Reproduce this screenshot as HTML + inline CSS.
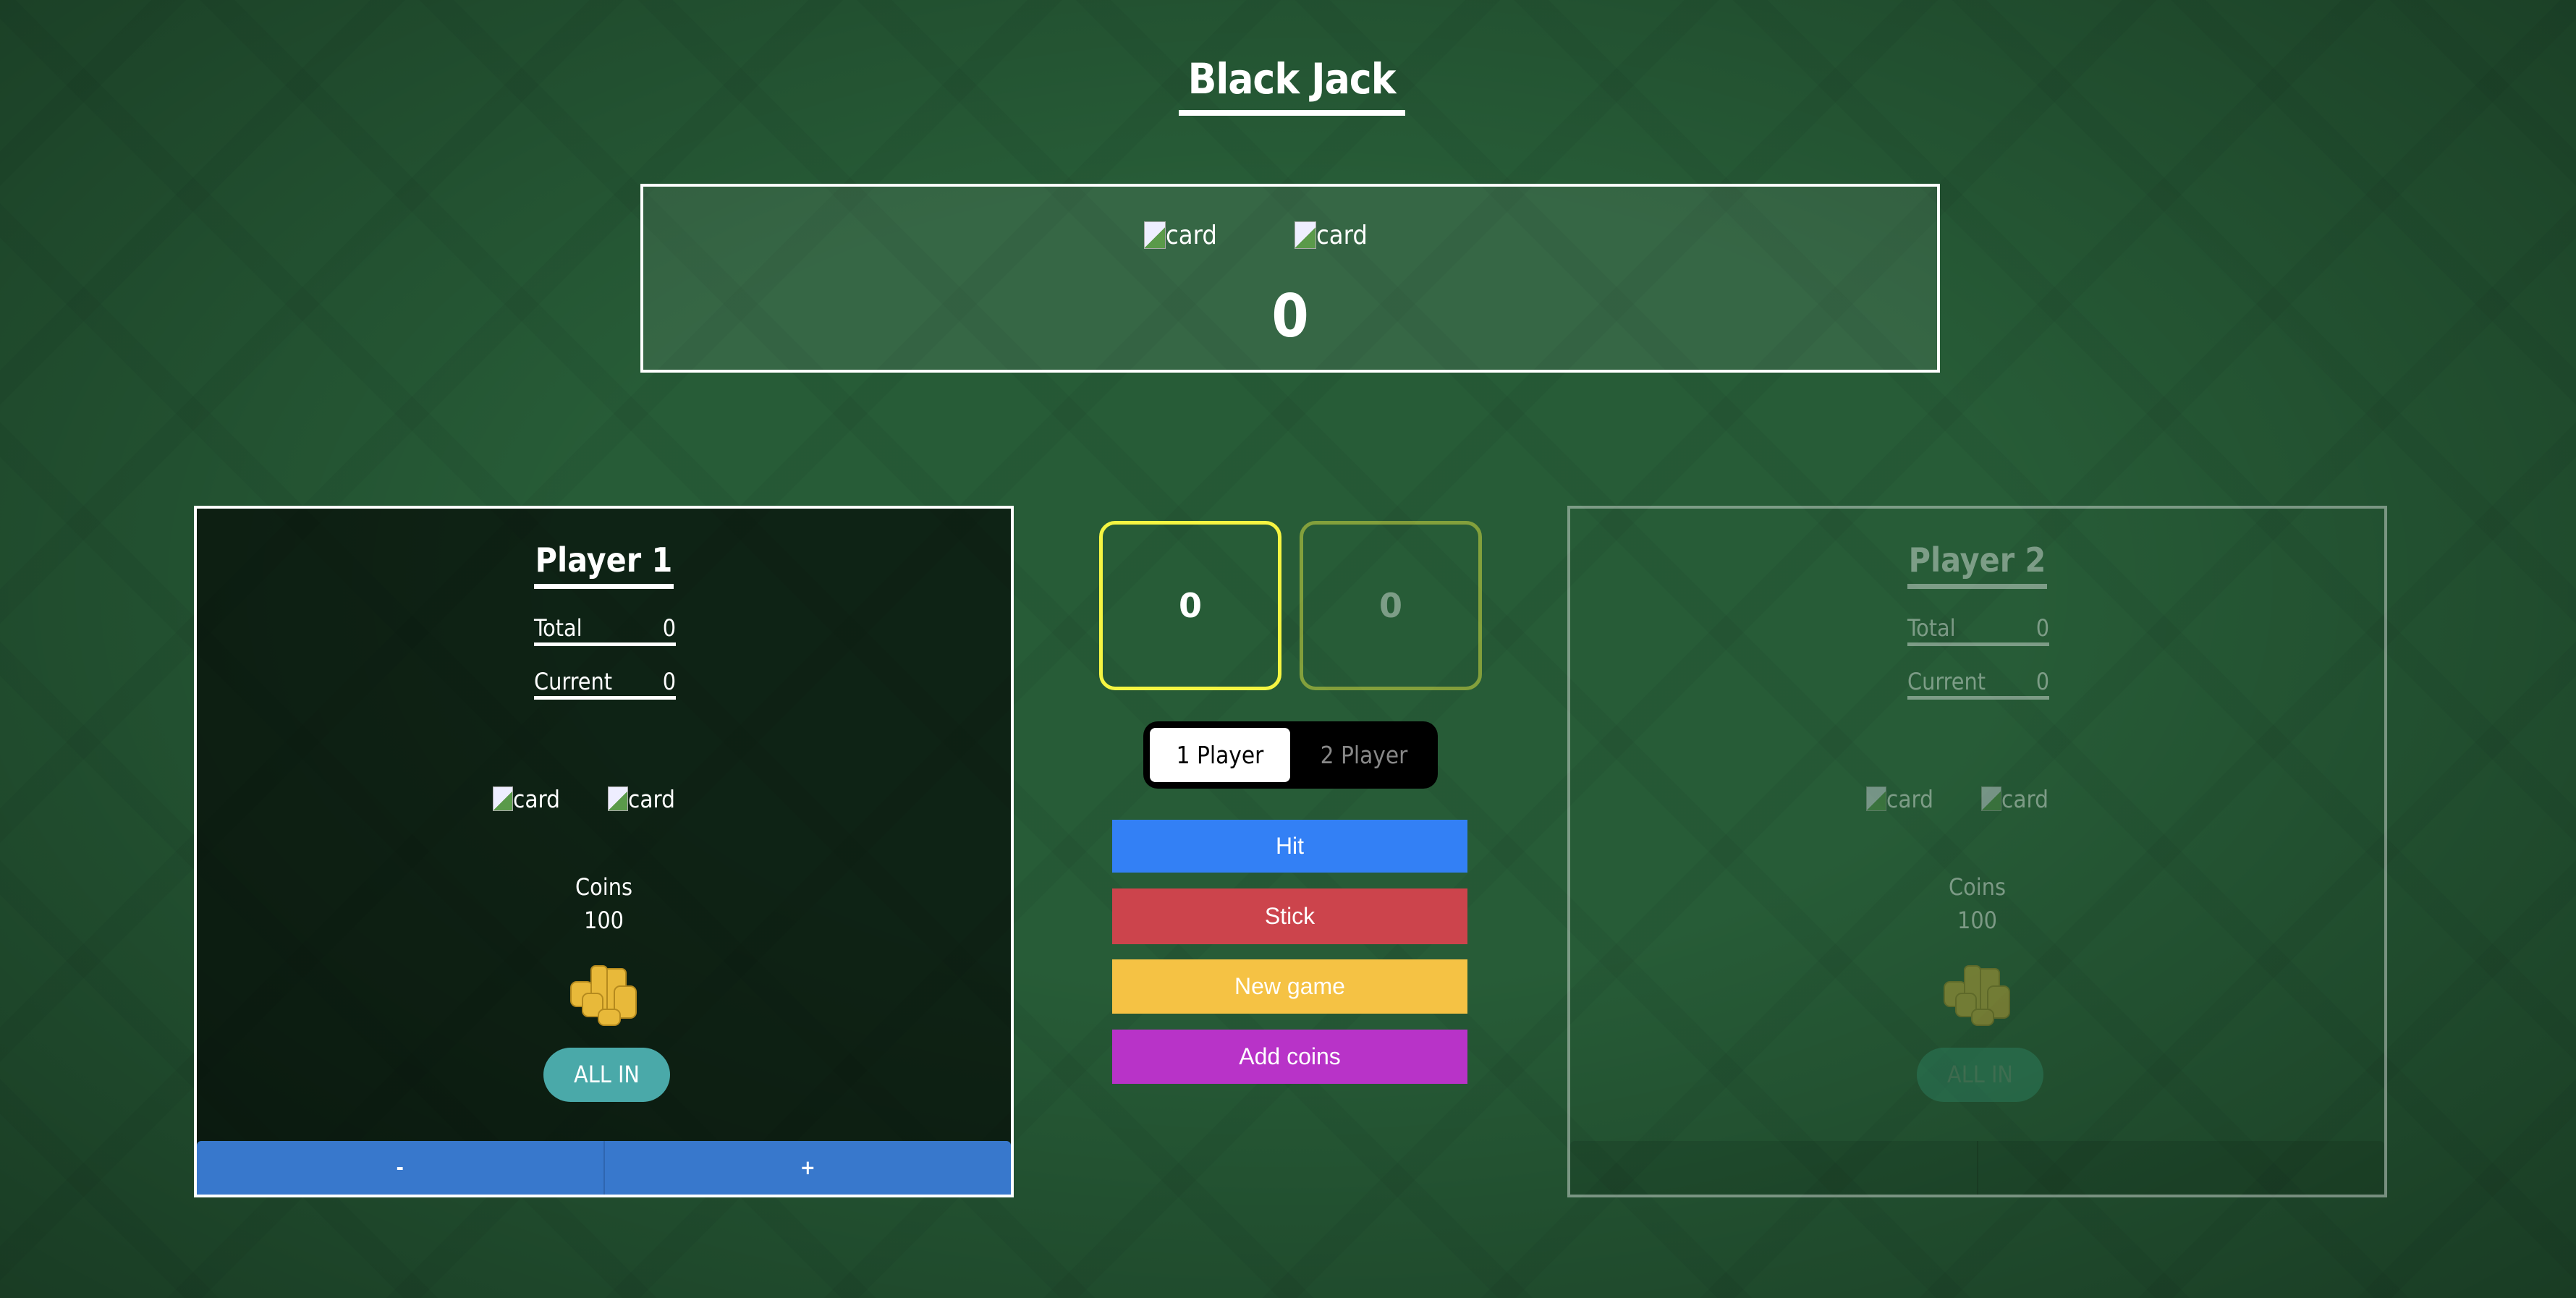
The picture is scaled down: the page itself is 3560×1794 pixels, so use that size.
<!DOCTYPE html>
<html><head><meta charset="utf-8"><style>
*{margin:0;padding:0;box-sizing:border-box}
html,body{width:3560px;height:1794px;overflow:hidden}
body{position:relative;font-family:"DejaVu Sans Condensed","DejaVu Sans","Liberation Sans",sans-serif;color:#fff;
background:
radial-gradient(ellipse at 50% 45%,rgba(0,0,0,0) 40%,rgba(0,0,0,.35) 100%),
repeating-linear-gradient(45deg,rgba(0,0,0,0) 0 180px,rgba(0,0,0,.045) 180px 214px),
repeating-linear-gradient(-45deg,rgba(0,0,0,0) 0 180px,rgba(0,0,0,.045) 180px 214px),
#275c37;}
.a{position:absolute}
.title{left:1505px;top:66px;width:560px;text-align:center;white-space:nowrap}
.title span{display:inline-block;width:313px;font-size:58px;font-weight:bold;line-height:86px;border-bottom:8px solid #fff;white-space:nowrap;letter-spacing:-1px}
.dealer{left:885px;top:254px;width:1796px;height:261px;border:4px solid #fff;background:rgba(255,255,255,.07)}
.card{font-size:36px;display:inline-flex;align-items:flex-end;line-height:1;white-space:nowrap}
.card i{display:inline-block;width:30px;height:38px;background:linear-gradient(135deg,#eef 0 55%,#5a9a4a 55%);border:1px solid #aaa}
.panel{top:699px;width:1133px;height:956px;border:4px solid #fff}
.p1{left:268px;background:rgba(0,0,0,.62)}
.p2{left:2166px;opacity:.4}
.ph{position:absolute;left:0;right:0;top:38px;text-align:center}
.ph span{display:inline-block;font-size:46px;font-weight:bold;line-height:66px;border-bottom:7px solid #fff;padding:0 2px;white-space:nowrap}
.row{position:absolute;left:466px;width:196px;font-size:32px;border-bottom:5px solid #fff;height:44px;display:flex;justify-content:space-between;line-height:38px}
.pc{position:absolute;top:384px;font-size:33px}
.pc i{width:28px;height:34px}
.coins{position:absolute;top:1200px;width:100%;text-align:center;font-size:32px;line-height:46px}
.allin{position:absolute;left:479px;top:745px;width:175px;height:75px;border-radius:38px;background:#4aa9a9;font-size:32px;line-height:75px;text-align:center}
.pm{position:absolute;left:0;right:0;bottom:0;height:74px;background:#3878cc;display:flex;border-radius:6px 6px 0 0}
.pm div{flex:1;text-align:center;font-size:28px;line-height:74px;font-weight:bold}
.pm div+div{border-left:2px solid #2e66b0}
.sb{top:720px;width:252px;height:234px;border:5px solid #f5f542;border-radius:22px;text-align:center;line-height:224px;font-size:46px;font-weight:bold;font-family:"DejaVu Sans",sans-serif}
.tog{left:1580px;top:997px;width:407px;height:93px;background:#000;border-radius:20px}
.tog .on{position:absolute;left:9px;top:9px;width:194px;height:75px;background:#fff;border-radius:8px;color:#000;text-align:center;line-height:75px;font-size:33px}
.tog .off{position:absolute;left:203px;top:9px;width:204px;height:75px;text-align:center;line-height:75px;font-size:33px;color:#888}
.btn{left:1537px;width:491px;text-align:center;font-family:"Liberation Sans",sans-serif;font-size:32px}
.coinimg{position:absolute;left:515px;top:630px;width:95px;height:86px}
</style></head><body>
<div class="a title"><span>Black Jack</span></div>
<div class="a dealer">
 <div style="position:absolute;left:692px;top:48px" class="card"><i></i>card</div>
 <div style="position:absolute;left:900px;top:48px" class="card"><i></i>card</div>
 <div style="position:absolute;left:0;right:0;top:130px;text-align:center;font-size:82px;font-weight:bold;line-height:100px">0</div>
</div>

<div class="a panel p1">
 <div class="ph"><span>Player 1</span></div>
 <div class="row" style="top:146px"><span>Total</span><span>0</span></div>
 <div class="row" style="top:220px"><span>Current</span><span>0</span></div>
 <span class="card pc" style="left:409px"><i></i>card</span><span class="card pc" style="left:568px"><i></i>card</span>
 <div class="coins" style="top:500px">Coins<br>100</div>
 <svg class="coinimg" viewBox="0 0 95 86"><g fill="#e8b93a" stroke="#b58a1e" stroke-width="2"><rect x="2" y="24" width="30" height="34" rx="8"/><rect x="48" y="6" width="30" height="60" rx="6"/><rect x="30" y="2" width="22" height="70" rx="6"/><rect x="18" y="40" width="28" height="32" rx="8"/><rect x="62" y="30" width="30" height="44" rx="8"/><rect x="40" y="62" width="30" height="22" rx="8"/></g></svg>
 <div class="allin">ALL IN</div>
 <div class="pm"><div>-</div><div>+</div></div>
</div>

<div class="a panel p2">
 <div class="ph"><span>Player 2</span></div>
 <div class="row" style="top:146px"><span>Total</span><span>0</span></div>
 <div class="row" style="top:220px"><span>Current</span><span>0</span></div>
 <span class="card pc" style="left:409px"><i></i>card</span><span class="card pc" style="left:568px"><i></i>card</span>
 <div class="coins" style="top:500px">Coins<br>100</div>
 <svg class="coinimg" viewBox="0 0 95 86"><g fill="#e8b93a" stroke="#b58a1e" stroke-width="2"><rect x="2" y="24" width="30" height="34" rx="8"/><rect x="48" y="6" width="30" height="60" rx="6"/><rect x="30" y="2" width="22" height="70" rx="6"/><rect x="18" y="40" width="28" height="32" rx="8"/><rect x="62" y="30" width="30" height="44" rx="8"/><rect x="40" y="62" width="30" height="22" rx="8"/></g></svg>
 <div class="allin" style="background:#2f8a6a;color:#6a9a80">ALL IN</div>
 <div class="pm" style="background:rgba(0,0,0,.25)"><div></div><div style="border-left:2px solid rgba(0,0,0,.4)"></div></div>
</div>

<div class="a sb" style="left:1519px">0</div>
<div class="a sb" style="left:1796px;border-color:rgba(245,245,66,.45);color:rgba(255,255,255,.4)">0</div>
<div class="a tog"><div class="on">1 Player</div><div class="off">2 Player</div></div>
<div class="a btn" style="top:1133px;height:73px;line-height:73px;background:#3380f5">Hit</div>
<div class="a btn" style="top:1228px;height:77px;line-height:77px;background:#cc444c">Stick</div>
<div class="a btn" style="top:1326px;height:75px;line-height:75px;background:#f5c244">New game</div>
<div class="a btn" style="top:1423px;height:75px;line-height:75px;background:#b833c8">Add coins</div>
</body></html>
